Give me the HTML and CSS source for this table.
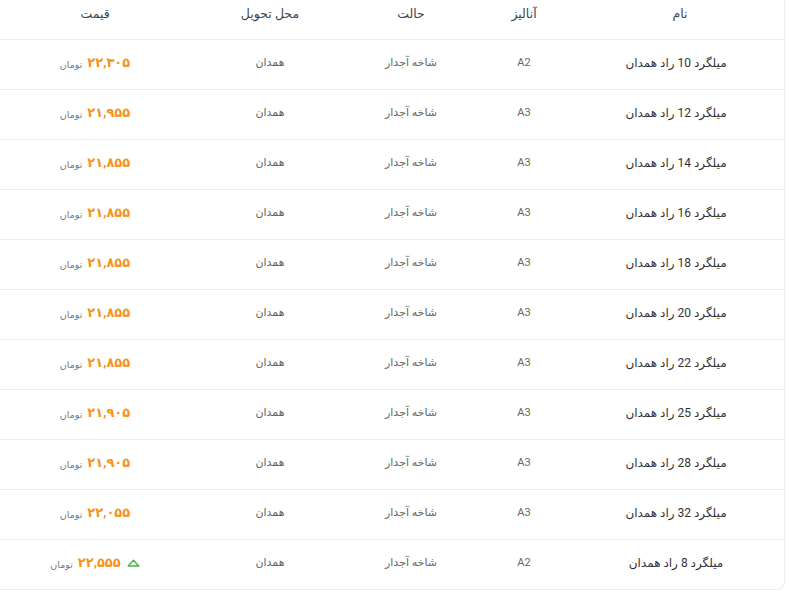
FILE: index.html
```html
<!DOCTYPE html>
<html lang="fa" dir="rtl">
<head>
<meta charset="utf-8">
<link rel="stylesheet" href="styles.css">
</head>
<body>
<div class="card">
  <table class="prices">
    <colgroup>
      <col class="c-name"><col class="c-an"><col class="c-state"><col class="c-del"><col class="c-price">
    </colgroup>
    <thead>
      <tr><th>نام</th><th>آنالیز</th><th>حالت</th><th>محل تحویل</th><th>قیمت</th></tr>
    </thead>
    <tbody>
      <tr><td class="name">میلگرد 10 راد همدان</td><td class="sub">A2</td><td class="sub">شاخه آجدار</td><td class="sub">همدان</td><td class="pcell"><span class="price"><b>۲۲,۳۰۵</b><small>تومان</small></span></td></tr>
      <tr><td class="name">میلگرد 12 راد همدان</td><td class="sub">A3</td><td class="sub">شاخه آجدار</td><td class="sub">همدان</td><td class="pcell"><span class="price"><b>۲۱,۹۵۵</b><small>تومان</small></span></td></tr>
      <tr><td class="name">میلگرد 14 راد همدان</td><td class="sub">A3</td><td class="sub">شاخه آجدار</td><td class="sub">همدان</td><td class="pcell"><span class="price"><b>۲۱,۸۵۵</b><small>تومان</small></span></td></tr>
      <tr><td class="name">میلگرد 16 راد همدان</td><td class="sub">A3</td><td class="sub">شاخه آجدار</td><td class="sub">همدان</td><td class="pcell"><span class="price"><b>۲۱,۸۵۵</b><small>تومان</small></span></td></tr>
      <tr><td class="name">میلگرد 18 راد همدان</td><td class="sub">A3</td><td class="sub">شاخه آجدار</td><td class="sub">همدان</td><td class="pcell"><span class="price"><b>۲۱,۸۵۵</b><small>تومان</small></span></td></tr>
      <tr><td class="name">میلگرد 20 راد همدان</td><td class="sub">A3</td><td class="sub">شاخه آجدار</td><td class="sub">همدان</td><td class="pcell"><span class="price"><b>۲۱,۸۵۵</b><small>تومان</small></span></td></tr>
      <tr><td class="name">میلگرد 22 راد همدان</td><td class="sub">A3</td><td class="sub">شاخه آجدار</td><td class="sub">همدان</td><td class="pcell"><span class="price"><b>۲۱,۸۵۵</b><small>تومان</small></span></td></tr>
      <tr><td class="name">میلگرد 25 راد همدان</td><td class="sub">A3</td><td class="sub">شاخه آجدار</td><td class="sub">همدان</td><td class="pcell"><span class="price"><b>۲۱,۹۰۵</b><small>تومان</small></span></td></tr>
      <tr><td class="name">میلگرد 28 راد همدان</td><td class="sub">A3</td><td class="sub">شاخه آجدار</td><td class="sub">همدان</td><td class="pcell"><span class="price"><b>۲۱,۹۰۵</b><small>تومان</small></span></td></tr>
      <tr><td class="name">میلگرد 32 راد همدان</td><td class="sub">A3</td><td class="sub">شاخه آجدار</td><td class="sub">همدان</td><td class="pcell"><span class="price"><b>۲۲,۰۵۵</b><small>تومان</small></span></td></tr>
      <tr><td class="name">میلگرد 8 راد همدان</td><td class="sub">A2</td><td class="sub">شاخه آجدار</td><td class="sub">همدان</td><td class="pcell"><span class="price"><svg class="up" width="13" height="8" viewBox="0 0 13 8"><path d="M1.2 7 L6.5 1.3 L11.8 7 Z" fill="none" stroke="#4caf50" stroke-width="1.4" stroke-linejoin="round"/></svg><b>۲۲,۵۵۵</b><small>تومان</small></span></td></tr>
    </tbody>
  </table>
</div>
</body>
</html>
```
FILE: styles.css
```css
html, body {
  margin: 0;
  padding: 0;
  background: #fff;
}
body {
  font-family: Roboto, "DejaVu Sans", sans-serif;
  color: #333;
}
.card {
  width: 784px;
  margin-right: 4px;
  border-right: 1px solid #ebebeb;
  border-bottom: 1px solid #ebebeb;
  border-bottom-right-radius: 8px;
  overflow: hidden;
}
.prices {
  width: 100%;
  border-collapse: collapse;
  table-layout: fixed;
}
.c-name { width: 208px; }
.c-an { width: 104px; }
.c-state { width: 122px; }
.c-del { width: 160px; }
.c-price { width: 190px; }
th {
  height: 39px;
  box-sizing: border-box;
  padding: 6px 0 17px;
  line-height: 16px;
  font-weight: normal;
  font-size: 12.5px;
  color: #444;
  text-align: center;
  vertical-align: middle;
  border-bottom: 1px solid #ebebeb;
}
td {
  height: 50px;
  box-sizing: border-box;
  padding: 0;
  line-height: 16px;
  text-align: center;
  vertical-align: middle;
  border-bottom: 1px solid #ebebeb;
}
tbody tr:last-child td {
  border-bottom: none;
  height: 49px;
}
td.name {
  font-size: 12px;
  color: #333;
  padding-right: 8px;
  padding-bottom: 3px;
}
td.sub {
  font-size: 11px;
  color: #666;
  padding-bottom: 3px;
}
td.pcell {
  padding-bottom: 3px;
}
.price {
  display: inline-flex;
  align-items: center;
  gap: 5px;
}
.price b {
  color: #f7941d;
  font-size: 13px;
  font-weight: bold;
}
.price small {
  color: #777;
  font-size: 9.5px;
  padding-top: 4px;
}
.up { margin-left: 1px; }
```
